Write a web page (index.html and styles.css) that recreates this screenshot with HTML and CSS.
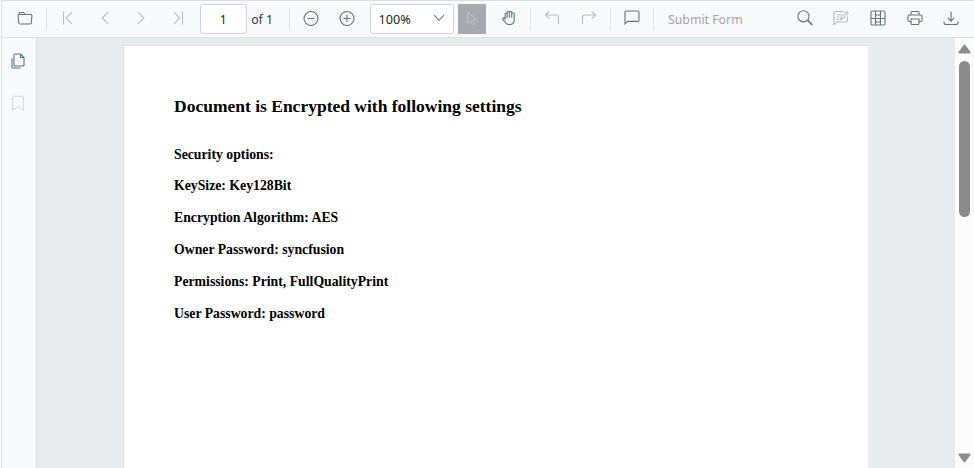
FILE: index.html
```html
<!DOCTYPE html>
<html lang="en">
<head>
<meta charset="utf-8">
<title>PDF Viewer</title>
<link rel="stylesheet" href="styles.css">
</head>
<body>
<div class="viewer">
  <header class="toolbar">
    <button class="tool open"><svg viewBox="0 0 16 16"><path d="M2 4.5V3.2Q2 2.5 2.8 2.5H6.5L8.2 4.5M2.5 4.5H13.5Q15 4.5 14.9 6L14.3 12.5Q14.2 14 12.8 14H3.2Q1.8 14 1.7 12.5L1.1 6Q1 4.5 2.5 4.5Z"/></svg></button>
    <i class="sep"></i>
    <button class="tool off"><svg viewBox="0 0 16 16"><path d="M3.5 1.5V14.5M12 2.2L6.2 8 12 13.8"/></svg></button>
    <button class="tool off"><svg viewBox="0 0 16 16"><path d="M11 2.2L5.2 8 11 13.8"/></svg></button>
    <button class="tool off"><svg viewBox="0 0 16 16"><path d="M5 2.2L10.8 8 5 13.8"/></svg></button>
    <button class="tool off"><svg viewBox="0 0 16 16"><path d="M12.5 1.5V14.5M4 2.2L9.8 8 4 13.8"/></svg></button>
    <div class="field page-number">1</div>
    <span class="page-total">of 1</span>
    <i class="sep"></i>
    <button class="tool"><svg viewBox="0 0 16 16"><circle cx="8" cy="8.5" r="7"/><path d="M4.5 8.5H11.5"/></svg></button>
    <button class="tool"><svg viewBox="0 0 16 16"><circle cx="8" cy="8.5" r="7"/><path d="M4.5 8.5H11.5M8 5V12"/></svg></button>
    <div class="field zoom">100%<svg viewBox="0 0 12 8"><path d="M1 1.2L6 6.3 11 1.2"/></svg></div>
    <button class="select"><svg viewBox="0 0 16 16"><path d="M3.5 1.5V13L6.5 10.6 8.5 14.7 10.7 13.7 8.8 9.8 12.5 9.5Z"/></svg></button>
    <button class="tool hand"><svg viewBox="0 0 16 16"><path d="M4.2 9.5V4Q4.2 3 5.2 3T6.2 4V8M6.2 8V2.4Q6.2 1.3 7.3 1.3T8.4 2.4V7.5M8.4 2.6Q8.5 1.4 9.5 1.4T10.7 2.6V7.8M10.7 4Q10.8 2.8 11.9 2.8T13.2 4V9.5Q13.2 14.6 8.7 14.6H8Q5.5 14.6 4.3 12.5L2 9.4Q1.4 8.2 2.5 7.7T4.2 9.5"/></svg></button>
    <i class="sep"></i>
    <button class="tool off"><svg viewBox="0 0 16 16"><path d="M5.3 1.3L1.5 5 5.3 8.7M1.5 5H12Q14.5 5 14.5 7.5V14"/></svg></button>
    <button class="tool off"><svg viewBox="0 0 16 16"><path d="M10.7 1.3L14.5 5 10.7 8.7M14.5 5H4Q1.5 5 1.5 7.5V14"/></svg></button>
    <i class="sep"></i>
    <button class="tool"><svg viewBox="0 0 16 16"><path d="M1 14V2.2Q1 1 2.2 1H13.8Q15 1 15 2.2V10.2Q15 11.4 13.8 11.4H3.7Z"/></svg></button>
    <i class="sep"></i>
    <span class="submit">Submit Form</span>
    <div class="right">
      <button class="tool"><svg viewBox="0 0 16 16"><circle cx="6.5" cy="6.3" r="5.6"/><path class="handle" d="M10.6 10.3L15.3 14.8"/></svg></button>
      <button class="tool off"><svg viewBox="0 0 16 16"><path d="M10.5 1.5H2.2Q1 1.5 1 2.7V14.5L3.8 12H13Q14.5 12 14.5 10.8V6.5M3.8 4.7H8.5M3.8 7.2H6.5M3.8 9.6H6M7.5 9.6L8.1 7.2 13.6 1.7 15.2 3.3 9.8 8.8Z"/></svg></button>
      <button class="tool"><svg viewBox="0 0 16 16"><rect x="1" y="1" width="14" height="14" rx="1.2"/><path d="M5.5 1V15M10.5 1V15M1 8.5H15M5.5 5H10.5M5.5 12H10.5"/></svg></button>
      <button class="tool"><svg viewBox="0 0 16 16"><path d="M4 5V2.5Q4 1.5 5 1.5H11Q12 1.5 12 2.5V5M4 11.5H2.2Q1 11.5 1 10.3V6.5Q1 5 2.5 5H13.5Q15 5 15 6.5V10.3Q15 11.5 13.8 11.5H12M4 9H12V13.5Q12 14.5 11 14.5H5Q4 14.5 4 13.5Z"/></svg></button>
      <button class="tool"><svg viewBox="0 0 16 16"><path d="M8 1.5V11M4.8 7.9L8 11.1 11.2 7.9M1 11.5V12.5Q1 14.5 3 14.5H13Q15 14.5 15 12.5V11.5"/></svg></button>
    </div>
  </header>
  <div class="body">
    <nav class="sidebar">
      <button class="pages"><svg viewBox="0 0 16 16"><path d="M5 1H10.5L14 4.5V12Q14 13 13 13H5Q4 13 4 12V2Q4 1 5 1ZM10.5 1V4.5H14M2 5.5V14Q2 15 3 15H10.5"/></svg></button>
      <button class="bookmark"><svg viewBox="0 0 16 16"><path d="M2.5 15V2.5Q2.5 1.2 3.8 1.2H12.2Q13.5 1.2 13.5 2.5V15L8 11.8Z"/></svg></button>
    </nav>
    <main class="canvas">
      <article class="page">
        <h1>Document is Encrypted with following settings</h1>
        <p>Security options:</p>
        <p>KeySize: Key128Bit</p>
        <p>Encryption Algorithm: AES</p>
        <p>Owner Password: syncfusion</p>
        <p>Permissions: Print, FullQualityPrint</p>
        <p>User Password: password</p>
      </article>
    </main>
    <div class="scrollbar">
      <svg viewBox="0 0 13 10"><path d="M5.5 1.2Q6.5 0 7.5 1.2L12.5 8Q13 9.5 11.5 9.5H1.5Q0 9.5 .5 8Z"/></svg>
      <div class="thumb"></div>
      <svg class="down" viewBox="0 0 13 10"><path d="M5.5 8.8Q6.5 10 7.5 8.8L12.5 2Q13 .5 11.5 .5H1.5Q0 .5 .5 2Z"/></svg>
    </div>
  </div>
</div>
</body>
</html>
```
FILE: styles.css
```css
* { box-sizing: border-box; }
body { margin: 0; background: #fff; font-family: "Noto Sans", sans-serif; }
button { padding: 0; border: 0; background: none; }
svg { display: block; fill: none; stroke: #6b727b; stroke-width: 1.1; }

.viewer {
  display: flex;
  flex-direction: column;
  height: 468px;
  margin-left: 1px;
  border: solid #dcdfe6;
  border-width: 1px 0 0 1px;
  overflow: hidden;
}
.toolbar {
  display: flex;
  flex: none;
  align-items: center;
  height: 37px;
  padding-right: 4.6px;
  border-bottom: 1px solid #dfe3e8;
  background: #f8f9fb;
  color: #33373d;
  font-size: 12.3px;
  white-space: nowrap;
}
.tool {
  display: flex;
  flex: none;
  align-items: center;
  justify-content: center;
  width: 36.6px;
  height: 30px;
}
.tool svg { width: 16px; height: 16px; margin-top: -2px; }
.handle { stroke-width: 1.6; }
.open { width: 44px; padding-left: 1px; }
.off svg { stroke: #b9bcc1; }
.sep { flex: none; width: 1px; height: 22px; margin: 0 2.7px; background: #dcdfe6; }
.open + .sep { margin-left: 0; }
.field {
  display: flex;
  flex: none;
  align-items: center;
  height: 30px;
  border: 1px solid #ced2da;
  border-radius: 3px;
  background: #fff;
  color: #212529;
}
.page-number { justify-content: center; width: 47px; margin-left: 3.6px; font-size: 12px; }
.page-total { flex: none; width: 42px; padding-left: 4.5px; font-size: 12.3px; }
.page-total + .sep { margin-left: 0; }
.zoom { justify-content: space-between; width: 84px; margin: 0 4px; padding: 0 8px; font-size: 12.7px; }
.zoom svg { width: 12px; height: 8px; margin-top: -2px; }
.select {
  display: flex;
  flex: none;
  align-items: center;
  justify-content: center;
  width: 28px;
  height: 30px;
  background: #a6a9af;
}
.select svg { width: 16px; height: 16px; margin-top: -3px; stroke: #b9bcc1; }
.hand { margin-left: 5.3px; }
.hand svg { margin-top: -3px; stroke: #667590; }
.submit { margin-left: 11.7px; color: #a2a5aa; }
.right { display: flex; margin-left: auto; }

.body { display: flex; flex: 1; min-height: 0; }
.sidebar {
  display: flex;
  flex: none;
  flex-direction: column;
  align-items: center;
  gap: 26px;
  width: 35px;
  padding: 15px 2px 0 0;
  border-right: 1px solid #dcdfe6;
  background: #f8f9fb;
}
.sidebar svg { width: 16px; height: 16px; }
.pages svg { stroke: #5f6f91; }
.bookmark svg { stroke: #d5d7da; }
.canvas {
  flex: 1;
  min-width: 0;
  padding: 7px 87px 0 86px;
  background: #e8ebee;
}
.page {
  height: 500px;
  padding: 50px 0 0 50px;
  border: solid #dcdfe4;
  border-width: 1px 0 0 1px;
  background: #fff;
  color: #000;
  font-family: "Liberation Serif", serif;
  font-weight: bold;
  white-space: nowrap;
}
.page h1 { margin: 0 0 27.6px; font-size: 17.5px; line-height: 21px; }
.page p { margin: 0 0 11.8px; font-size: 13.75px; line-height: 20px; }
.scrollbar {
  display: flex;
  flex: none;
  flex-direction: column;
  align-items: center;
  width: 19px;
  padding: 6px 0 5px;
  background: #fcfcfc;
}
.scrollbar svg { width: 13px; height: 10px; fill: #8b8b8b; stroke: none; }
.thumb { width: 11px; height: 156px; margin-top: 7px; border-radius: 6px; background: #8b8b8b; }
.down { margin-top: auto; }
```
